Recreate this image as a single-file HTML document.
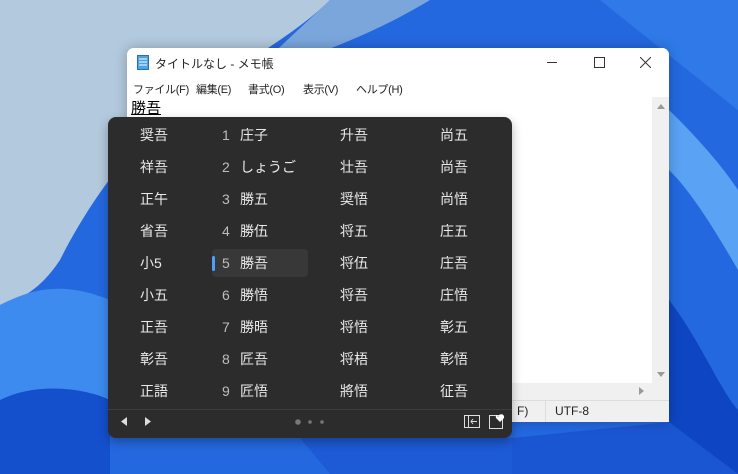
<!DOCTYPE html>
<html><head><meta charset="utf-8"><style>
*{margin:0;padding:0;box-sizing:border-box}
body{width:738px;height:474px;overflow:hidden;position:relative;font-family:"Liberation Sans","Noto Sans CJK JP",sans-serif;background:#2468df}
.win{position:absolute;left:127px;top:48px;width:542px;height:374px;background:#fff;border-radius:7px 7px 0 0;overflow:hidden;box-shadow:0 0 12px rgba(0,0,0,.25)}
.title{position:absolute;left:0;top:0;width:100%;height:30px;background:#fff;font-size:12px;color:#222}
.menu{position:absolute;left:0;top:30px;height:19px;width:100%;font-size:11px;color:#222;letter-spacing:-0.3px}
.menu span{position:absolute;top:3px}
.edit{position:absolute;left:0;top:49px;width:525px;height:286px;background:#fff}
.vs{position:absolute;left:525px;top:49px;width:17px;height:286px;background:#f0f0f0}
.hs{position:absolute;left:0;top:335px;width:542px;height:17px;background:#f0f0f0}
.st{position:absolute;left:0;top:352px;width:542px;height:22px;background:#f0f0f0;border-top:1px solid #ddd;font-size:12px;color:#222}
.pop{position:absolute;left:108px;top:117px;width:404px;height:321px;background:#2c2c2c;border-radius:8px;color:#eaeaea;font-size:14px;box-shadow:0 4px 10px rgba(0,0,0,.3)}
.c{position:absolute;white-space:nowrap;line-height:18px}
.n{color:#bdbdbd}
</style></head><body>
<svg width="738" height="474" style="position:absolute;left:0;top:0">
<rect width="738" height="474" fill="#2468df"/>
<path d="M0 0 L330 0 C300 30 250 60 200 90 C140 130 90 200 60 260 C40 290 20 300 0 305 Z" fill="#b3c9dd"/>
<path d="M330 0 L430 0 C380 30 340 45 300 60 L250 75 Z" fill="#7aa6dc"/>
<path d="M0 305 C30 290 60 280 110 300 L110 474 L0 474Z" fill="#3d8bef"/>
<path d="M0 400 C40 380 90 390 110 400 L110 474 L0 474Z" fill="#1450cc"/>
<path d="M430 0 L600 0 C650 40 700 80 738 110 L738 0Z" fill="#2f7ae8"/>
<path d="M669 110 C700 140 725 170 738 190 L738 270 C715 230 690 190 669 170Z" fill="#5aa2f4"/>
<path d="M669 300 C700 340 720 390 738 410 L738 474 L669 474Z" fill="#0e45c2"/>
<path d="M512 438 L669 422 L738 474 L512 474Z" fill="#1b56d2"/>
<path d="M300 438 L512 438 L512 474 L330 474Z" fill="#1d5ad6"/>
</svg>
<div class="win">
 <div class="title">
  <svg style="position:absolute;left:10px;top:6px" width="12" height="16"><rect x="0.5" y="1.5" width="11" height="14" fill="#4ba3e0" stroke="#2a6fb0"/><line x1="2" y1="5" x2="10" y2="5" stroke="#fff"/><line x1="2" y1="8" x2="10" y2="8" stroke="#fff"/><line x1="2" y1="11" x2="10" y2="11" stroke="#fff"/></svg>
  <span style="position:absolute;left:28px;top:7px">タイトルなし - メモ帳</span>
  <div style="position:absolute;left:420px;top:14px;width:10px;height:1px;background:#333"></div>
  <div style="position:absolute;left:467px;top:9px;width:11px;height:11px;border:1px solid #333"></div>
  <svg style="position:absolute;left:513px;top:9px" width="11" height="11"><path d="M0 0L11 11M11 0L0 11" stroke="#333"/></svg>
 </div>
 <div class="menu"><span style="left:6px">ファイル(F)</span><span style="left:69px">編集(E)</span><span style="left:121px">書式(O)</span><span style="left:176px">表示(V)</span><span style="left:229px">ヘルプ(H)</span></div>
 <div class="edit"><span style="position:absolute;left:4px;top:0;font-size:15px;color:#000;text-decoration:underline">勝吾</span></div>
 <div class="vs"><div style="position:absolute;left:5px;top:7px;border:4px solid transparent;border-bottom:5px solid #999;border-top:0"></div><div style="position:absolute;left:5px;bottom:6px;border:4px solid transparent;border-top:5px solid #999;border-bottom:0"></div></div>
 <div class="hs"><div style="position:absolute;left:512px;top:4px;border:4px solid transparent;border-left:5px solid #999;border-right:0"></div></div>
 <div class="st"><span style="position:absolute;left:390px;top:3px">F)</span><div style="position:absolute;left:418px;top:0;width:1px;height:22px;background:#ddd"></div><span style="position:absolute;left:428px;top:3px">UTF-8</span></div>
</div>
<div class="pop">
 <div style="position:absolute;left:104px;top:132px;width:96px;height:28px;background:#383838;border-radius:4px"></div>
 <div style="position:absolute;left:104px;top:139px;width:3px;height:15px;background:#4aa0ff;border-radius:2px"></div>
 <div style="position:absolute;left:0;top:292px;width:404px;height:1px;background:#3e3e3e"></div>
 <svg style="position:absolute;left:0;top:292px" width="404" height="29">
  <path d="M19 8L13 12.5L19 17Z" fill="#ddd"/><path d="M37 8L43 12.5L37 17Z" fill="#ddd"/>
  <circle cx="190" cy="13" r="2.8" fill="#777"/><circle cx="202" cy="13" r="1.8" fill="#777"/><circle cx="214" cy="13" r="1.8" fill="#777"/>
  <rect x="356.5" y="6.5" width="15" height="12" fill="none" stroke="#ddd"/><line x1="360.5" y1="7" x2="360.5" y2="18" stroke="#ddd"/><path d="M369 12.5H363M365 10L363 12.5L365 15" stroke="#ddd" fill="none"/>
  <rect x="381.5" y="6.5" width="13" height="13" fill="none" stroke="#ddd"/><path d="M390 9C390 4 397 4 396 9L392 13L388 9C387 5 390 5 390 9Z" fill="#fff"/>
 </svg>
 <div id="grid"></div>
</div>
<script>
var d=[["奨吾","庄子","升吾","尚五"],["祥吾","しょうご","壮吾","尚吾"],["正午","勝五","奨悟","尚悟"],["省吾","勝伍","将五","庄五"],["小5","勝吾","将伍","庄吾"],["小五","勝悟","将吾","庄悟"],["正吾","勝晤","将悟","彰五"],["彰吾","匠吾","将梧","彰悟"],["正語","匠悟","將悟","征吾"]];
var h="";for(var i=0;i<9;i++){var t=9+32*i;
h+='<div class="c" style="left:32px;top:'+t+'px">'+d[i][0]+'</div>';
h+='<div class="c n" style="left:114px;top:'+t+'px">'+(i+1)+'</div>';
h+='<div class="c" style="left:132px;top:'+t+'px">'+d[i][1]+'</div>';
h+='<div class="c" style="left:232px;top:'+t+'px">'+d[i][2]+'</div>';
h+='<div class="c" style="left:332px;top:'+t+'px">'+d[i][3]+'</div>';}
document.getElementById("grid").innerHTML=h;
</script>
</body></html>
